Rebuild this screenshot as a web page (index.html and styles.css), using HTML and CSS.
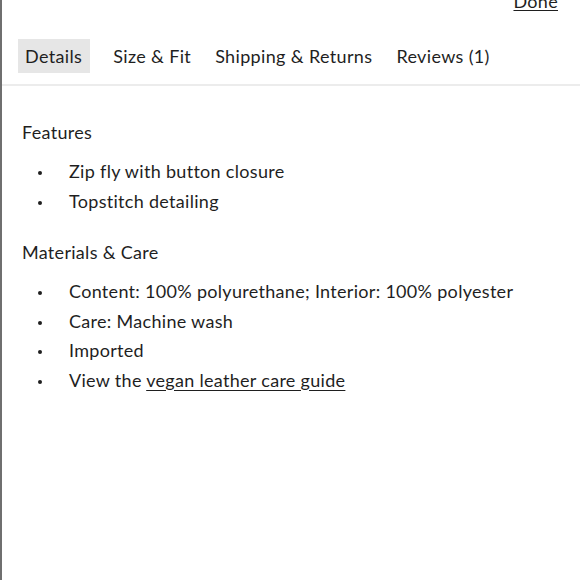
FILE: index.html
```html
<!DOCTYPE html>
<html>
<head>
<meta charset="utf-8">
<link rel="stylesheet" href="styles.css">
</head>
<body>
<div class="panel">
  <div class="top">
    <a class="done" href="#">Done</a>
  </div>
  <nav class="tabs">
    <span class="tab active">Details</span>
    <span class="tab">Size &amp; Fit</span>
    <span class="tab">Shipping &amp; Returns</span>
    <span class="tab">Reviews (1)</span>
  </nav>
  <div class="content">
    <h3 class="heading">Features</h3>
    <ul class="list">
      <li>Zip fly with button closure</li>
      <li>Topstitch detailing</li>
    </ul>
    <h3 class="heading">Materials &amp; Care</h3>
    <ul class="list">
      <li>Content: 100% polyurethane; Interior: 100% polyester</li>
      <li>Care: Machine wash</li>
      <li>Imported</li>
      <li><span>View the <a href="#">vegan leather care guide</a></span></li>
    </ul>
  </div>
</div>
</body>
</html>
```
FILE: styles.css
```css
html, body {
  margin: 0;
  padding: 0;
  background: #fff;
}
body {
  font-family: Lato, "Open Sans", sans-serif;
  color: #1f1f1f;
  font-size: 18px;
  letter-spacing: 0.3px;
}
.panel {
  height: 580px;
  border-left: 2px solid #6f6f6f;
  box-sizing: border-box;
}
.top {
  height: 39px;
  display: flex;
  justify-content: flex-end;
  align-items: flex-start;
  padding-right: 22px;
}
.done {
  color: #1f1f1f;
  margin-top: -10px;
  text-decoration: underline;
  text-underline-offset: 2px;
}
.tabs {
  display: flex;
  gap: 10px;
  padding: 0 0 11px 16px;
  border-bottom: 2px solid #ececec;
  letter-spacing: 0.35px;
}
.tab {
  padding: 0 7px;
  height: 34px;
  line-height: 34px;
}
.tab.active {
  background: #e6e6e6;
  padding-right: 8px;
  margin-right: 6px;
}
.content {
  padding: 31px 20px 0 20px;
}
.heading {
  font-weight: normal;
  font-size: 18px;
  margin: 0;
  line-height: 30px;
}
.list {
  list-style: none;
  margin: 10px 0 21px 0;
  padding-left: 16px;
}
.list li {
  display: flex;
  align-items: center;
  gap: 27px;
  line-height: 29.5px;
}
.list li::before {
  content: "";
  width: 4px;
  height: 4px;
  border-radius: 50%;
  background: #1f1f1f;
  flex: none;
  margin-top: 3px;
}
.list a {
  color: #1f1f1f;
  text-decoration: underline;
  text-underline-offset: 3px;
}
```
